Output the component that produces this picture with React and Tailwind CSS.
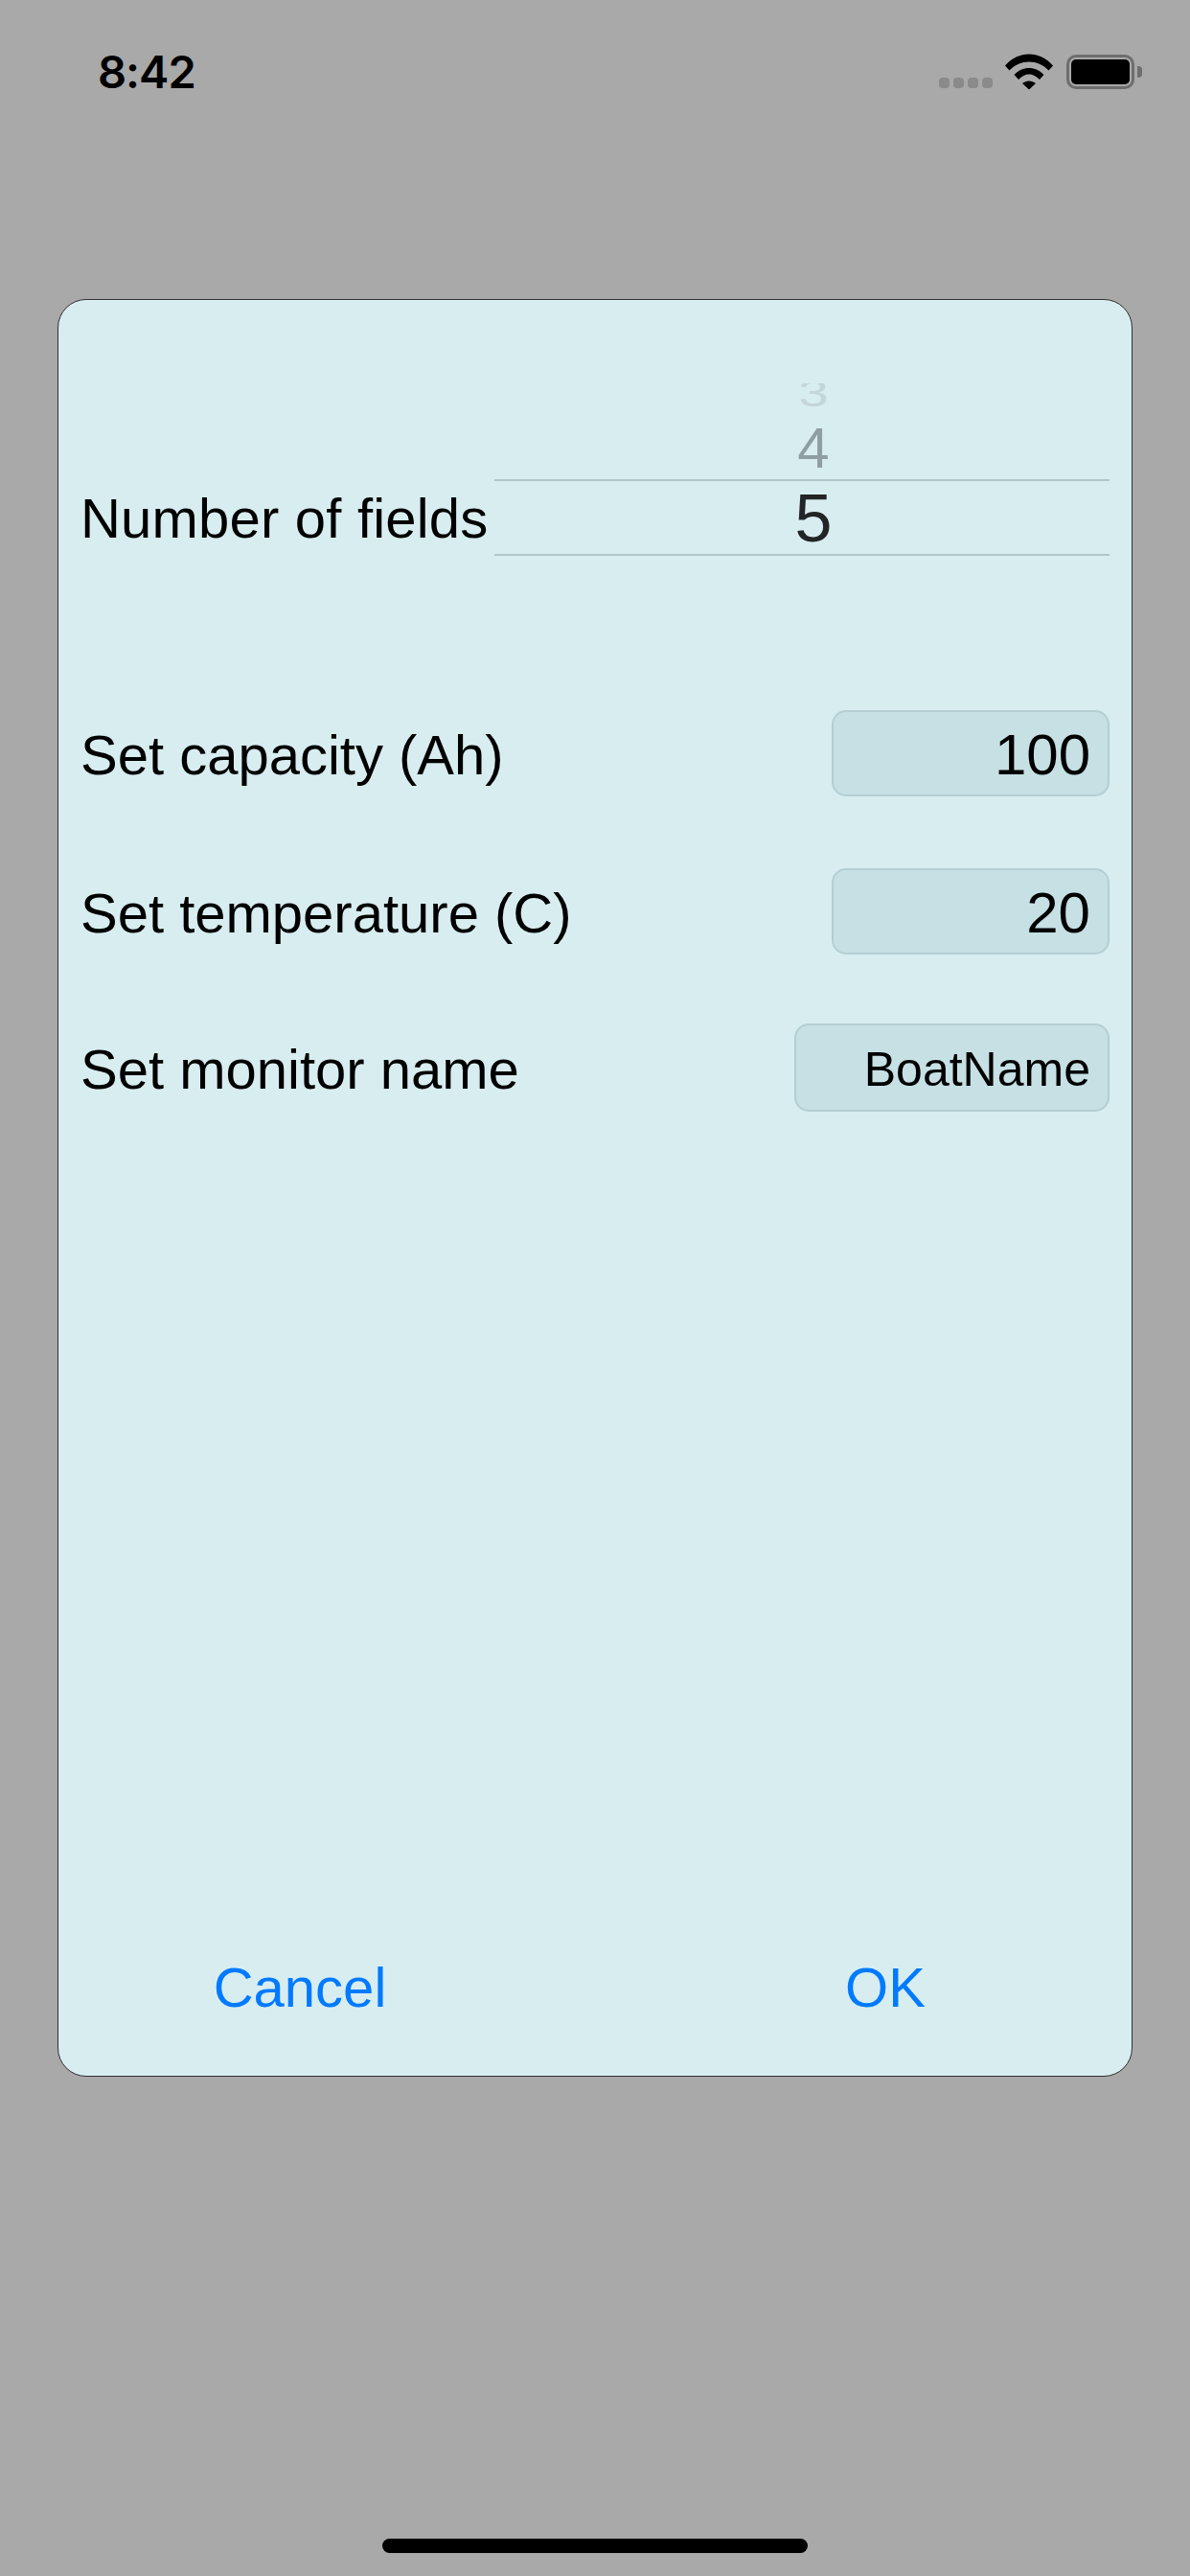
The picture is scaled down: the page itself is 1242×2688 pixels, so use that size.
import React from "react";

const font = "font-['Liberation_Sans',Arial,sans-serif]";

const WifiIcon = () => (
  <svg width="50" height="37" viewBox="0 0 50 37" fill="#000">
    <path d="M0 12.5C13.5 -3.5 36.5 -3.5 50 12.5L45.5 17.5C34 5.5 16 5.5 4.5 17.5Z" />
    <path d="M9.5 22C18 12.5 32 12.5 40.5 22L36 27C29 19.5 21 19.5 14 27Z" />
    <path d="M18 31C22 27.5 28 27.5 32 31L25 37.5Z" />
  </svg>
);

const StatusBar = () => (
  <div className="flex h-[148px] shrink-0 items-center justify-between pl-[102px] pr-[50px]">
    <span className="font-['Inter',sans-serif] text-[47px] font-semibold leading-none tracking-[-1px] text-black">8:42</span>
    <div className="flex h-[37px] items-end">
      <div className="mb-[1px] flex gap-[4px]">
        <div className="h-[11px] w-[11px] rounded-[4px] bg-[#8a8a8a]" />
        <div className="h-[11px] w-[11px] rounded-[4px] bg-[#8a8a8a]" />
        <div className="h-[11px] w-[11px] rounded-[4px] bg-[#8a8a8a]" />
        <div className="h-[11px] w-[11px] rounded-[4px] bg-[#8a8a8a]" />
      </div>
      <div className="ml-[13px]">
        <WifiIcon />
      </div>
      <div className="ml-[14px] flex items-center">
        <div className="h-[36px] w-[71px] rounded-[10px] border-[3px] border-[#6e6e6e] p-[2px]">
          <div className="h-full w-full rounded-[5px] bg-black" />
        </div>
        <div className="ml-[3px] h-[12px] w-[5px] rounded-r-[4px] bg-[#6e6e6e]" />
      </div>
    </div>
  </div>
);

const Picker = () => (
  <div className="flex w-[642px] flex-col items-center">
    <div className="flex h-[24px] w-[36px] translate-x-[12px] items-end justify-center overflow-hidden">
      <span className="origin-bottom translate-y-[6px] scale-y-[0.7] text-[56px] leading-[56px] text-[#c4d6da]">3</span>
    </div>
    <div className="flex h-[76px] w-full translate-x-[12px] items-center justify-center pt-[12px]">
      <span className="text-[60px] leading-none text-[#8e9ea2]">4</span>
    </div>
    <div className="flex h-[80px] w-full items-center justify-center border-y-2 border-[#b0c6ca] pl-[24px] pt-[2px]">
      <span className="text-[70px] leading-none text-[#222426]">5</span>
    </div>
  </div>
);

const Field = ({ label, value, boxClass, textClass }) => (
  <div className="flex items-center justify-between">
    <span className="pt-[4px] text-[58px] leading-none text-black">{label}</span>
    <div className={`flex items-center justify-end rounded-[15px] border-2 border-[#b4ced2] bg-[#c6e0e4] pr-[18px] pt-[3px] ${boxClass}`}>
      <span className={`leading-none text-black ${textClass}`}>{value}</span>
    </div>
  </div>
);

export default function App() {
  return (
    <div className={`flex h-[2688px] w-full flex-col bg-[#a9a9a9] ${font}`}>
      <StatusBar />
      <div className="mx-[60px] mt-[164px] flex h-[1855px] flex-col rounded-[30px] border-[1.5px] border-[#2f2f2f] bg-[#d8edf0] pl-[23px] pr-[23px] pt-[87px]">
        <div className="flex items-end justify-between">
          <span className="mb-[10px] text-[58px] leading-none tracking-[0.2px] text-black">Number of fields</span>
          <Picker />
        </div>
        <div className="mt-[161px] flex flex-col">
          <Field label="Set capacity (Ah)" value="100" boxClass="h-[90px] w-[290px]" textClass="text-[60px]" />
          <div className="mt-[75px]">
            <Field label="Set temperature (C)" value="20" boxClass="h-[90px] w-[290px]" textClass="text-[60px]" />
          </div>
          <div className="mt-[72px]">
            <Field label="Set monitor name" value="BoatName" boxClass="h-[92px] w-[329px]" textClass="text-[50px]" />
          </div>
        </div>
        <div className="mt-auto mb-[52px] flex gap-[187px] pl-[17px]">
          <button className="h-[80px] w-[424px] text-[58px] leading-none text-[#007aff]">Cancel</button>
          <button className="h-[80px] w-[424px] text-[58px] leading-none text-[#007aff]">OK</button>
        </div>
      </div>
      <div className="mt-auto mb-[24px] flex justify-center">
        <div className="h-[15px] w-[444px] rounded-full bg-black" />
      </div>
    </div>
  );
}
